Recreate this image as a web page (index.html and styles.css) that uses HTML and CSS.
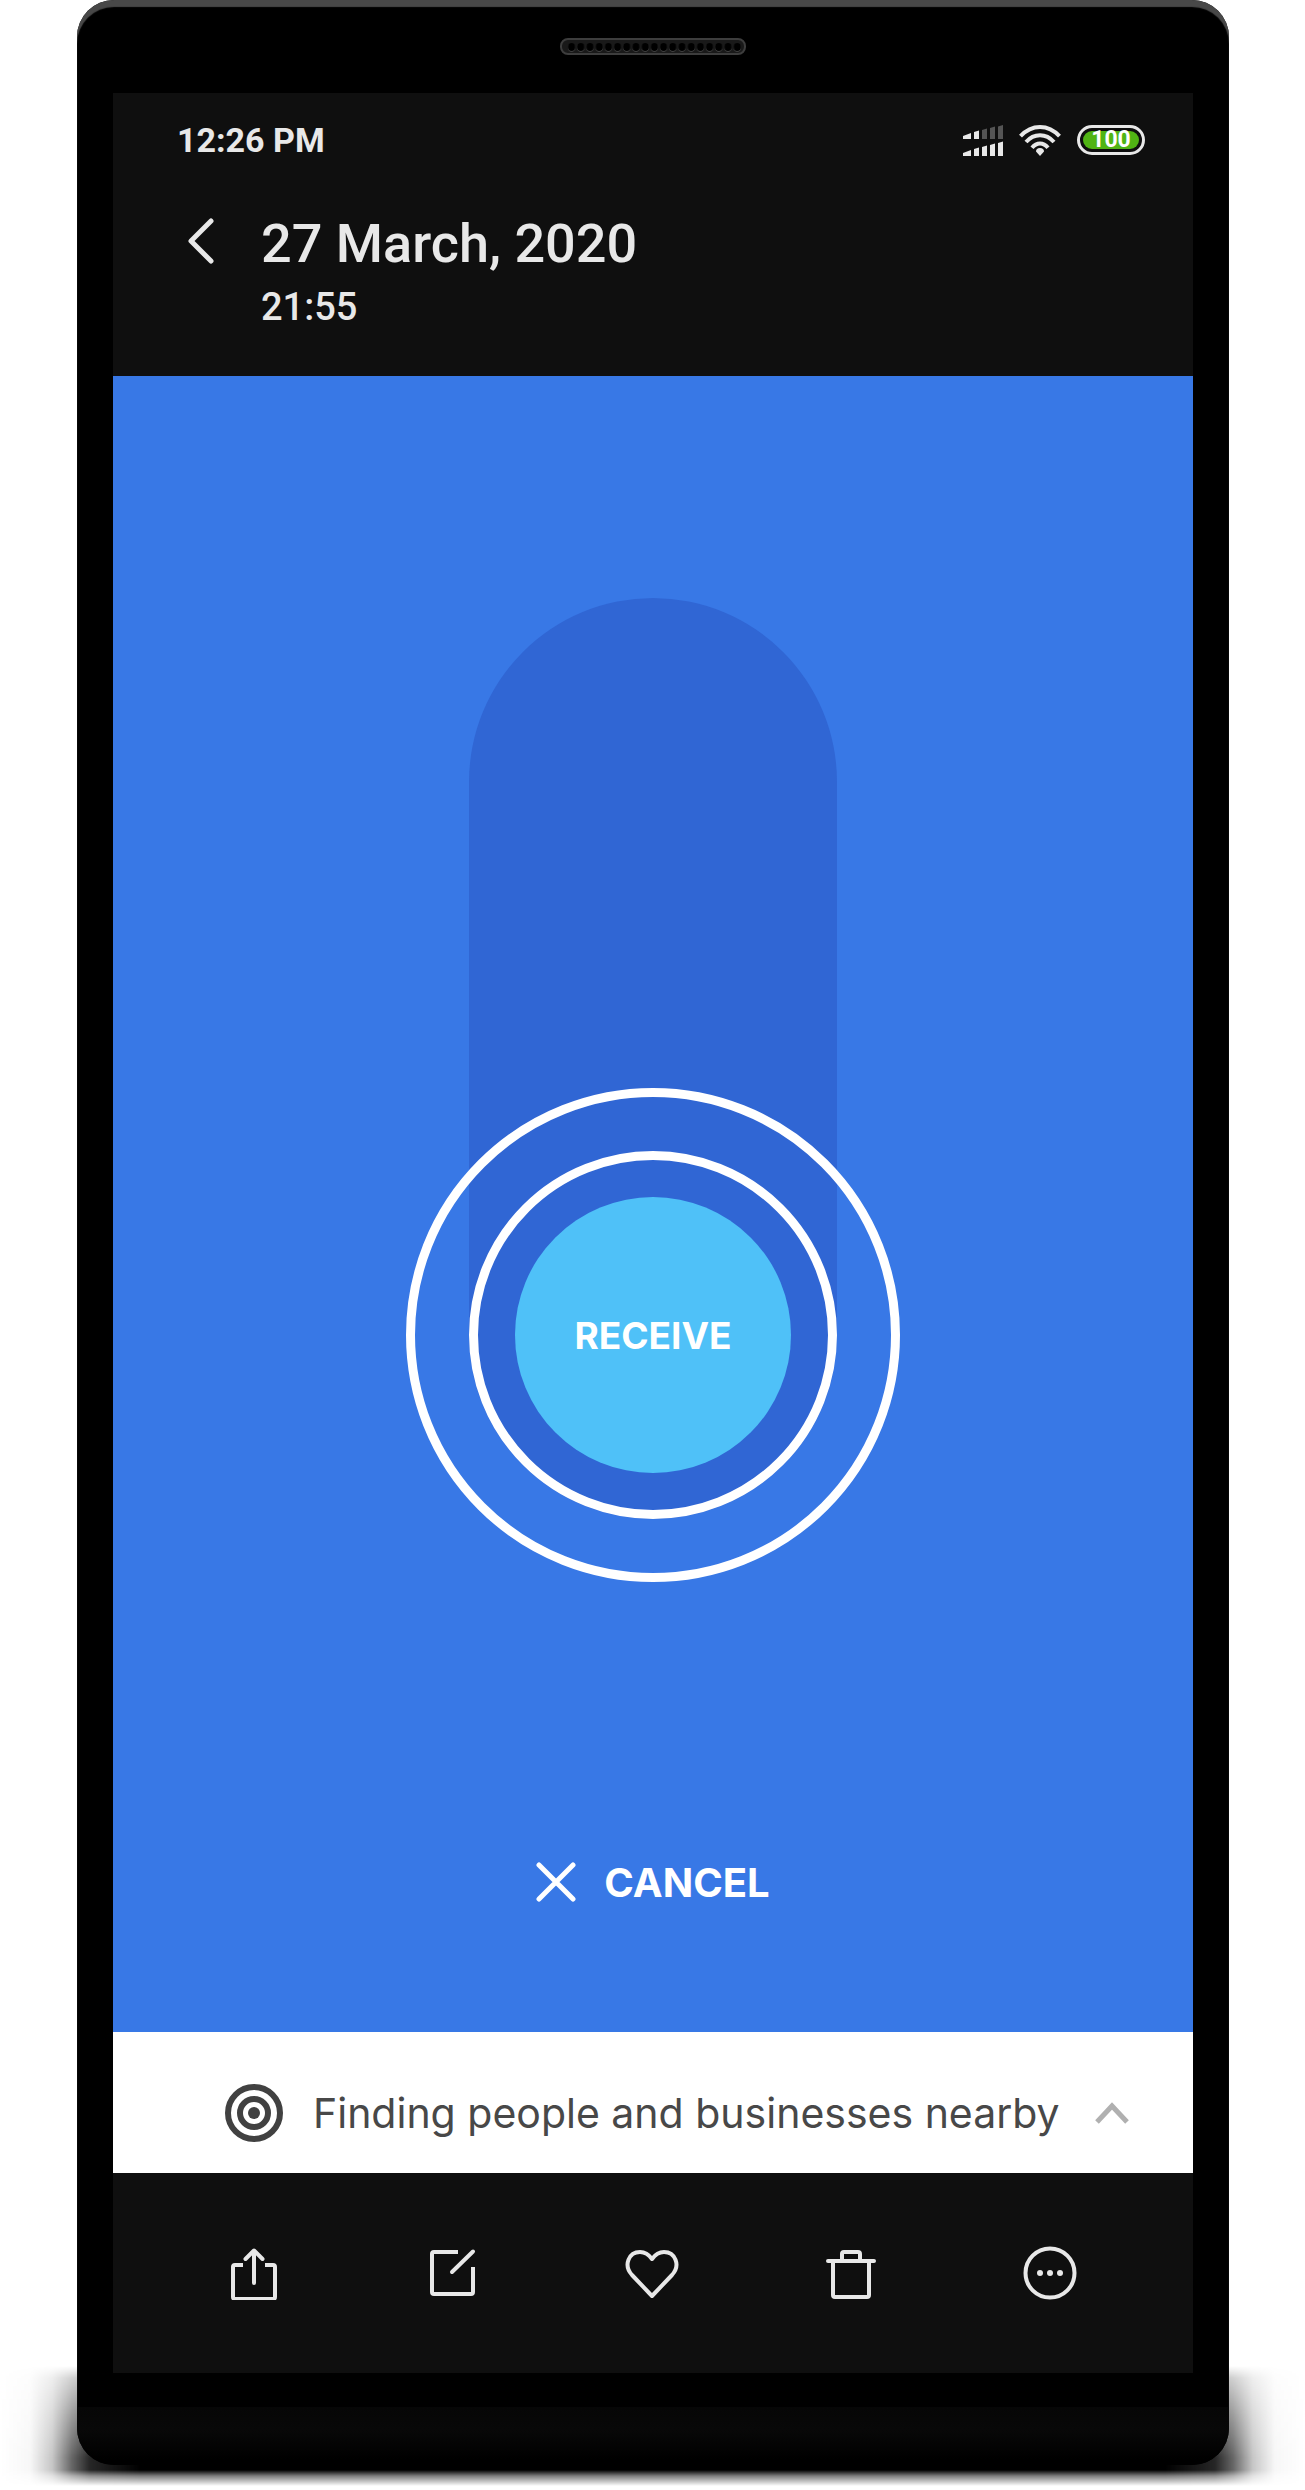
FILE: index.html
```html
<!DOCTYPE html>
<html lang="en">
<head>
<meta charset="utf-8">
<meta name="viewport" content="width=device-width, initial-scale=1">
<title>27 March, 2020</title>
<link rel="stylesheet" href="styles.css">
</head>
<body>
<div class="scene">
  <div class="ground-shadow"></div>
  <div class="phone">
    <div class="forehead">
      <svg class="speaker" width="186" height="18" viewBox="0 0 186 18" aria-hidden="true">
        <defs>
          <pattern id="holes" x="7" y="0" width="9.2" height="18" patternUnits="userSpaceOnUse">
            <ellipse cx="4.6" cy="9.8" rx="3.6" ry="4" fill="#4c4c4c"/>
            <ellipse cx="4.6" cy="9" rx="3.6" ry="4" fill="#000"/>
          </pattern>
        </defs>
        <rect x="1" y="1" width="184" height="15" rx="7" fill="#191919" stroke="#3d3d3d" stroke-width="2"/>
        <rect x="7" y="0" width="175" height="18" fill="url(#holes)"/>
      </svg>
    </div>
    <main class="screen">
      <div class="status">
        <span class="clock">12:26 PM</span>
        <div class="status-icons">
          <svg width="40" height="31" viewBox="0 0 40 31" aria-label="Signal">
            <g fill="#e8e8e8">
              <path d="M0 11l8-3v6H0zM11 7l5-1.500V14h-5z"/>
              <path d="M0 28l8-3v6H0zM11 24l5-1.500V31h-5zM19 22l5-1.500V31h-5zM27 20l5-1.500V31h-5zM35 18l5-1.500V31h-5z"/>
            </g>
            <path fill="#555" d="M19 5l5-1.500V14h-5zM27 3l5-1.500V14h-5zM35 1.500L40 0v14h-5z"/>
          </svg>
          <svg width="42" height="31" viewBox="0 0 42 31" fill="none" stroke="#e8e8e8" stroke-width="4" aria-label="Wi-Fi">
            <path d="M1.500 11.200Q10 2 21 2t19.500 9.200M7 17Q13 10.300 21 10.300T35 17M13 22.800Q16.500 18.500 21 18.500t8 4.300"/>
            <path fill="#e8e8e8" stroke="none" d="M21 31l-4-4.500q0-3.500 4-3.500t4 3.500z"/>
          </svg>
          <span class="battery"><span class="charge">100</span></span>
        </div>
      </div>
      <header class="title-bar">
        <button class="icon-button back" aria-label="Back">
          <svg width="28" height="48" viewBox="0 0 28 48" fill="none" stroke="#e8e8e8" stroke-width="5" stroke-linecap="round" stroke-linejoin="round"><path d="M24 4L4 24l20 20"/></svg>
        </button>
        <div>
          <h1 class="date">27 March, 2020</h1>
          <p class="time">21:55</p>
        </div>
      </header>
      <section class="transfer">
        <div class="slider">
          <div class="track"></div>
          <button class="knob"><span class="inner-ring"><span class="disc">RECEIVE</span></span></button>
        </div>
        <button class="cancel">
          <svg width="40" height="40" viewBox="0 0 40 40" stroke="#fff" stroke-width="5" stroke-linecap="round" aria-hidden="true"><path d="M3 3l34 34M37 3L3 37"/></svg>
          CANCEL
        </button>
      </section>
      <button class="nearby">
        <svg width="58" height="58" viewBox="0 0 58 58" fill="none" stroke="#414141" stroke-width="6" aria-hidden="true"><circle cx="29" cy="29" r="26"/><circle cx="29" cy="29" r="14"/><circle cx="29" cy="29" r="6" fill="#414141" stroke="none"/></svg>
        <span class="nearby-label">Finding people and businesses nearby</span>
        <svg width="34" height="22" viewBox="0 0 34 22" fill="none" stroke="#b0b0b0" stroke-width="5" aria-hidden="true"><path d="M2 20L17 4l15 16"/></svg>
      </button>
      <nav class="toolbar">
        <button class="icon-button" aria-label="Share">
          <svg class="tool" viewBox="0 0 54 54"><path d="M16 19H8q-2 0-2 2v30q0 2 2 2h38q2 0 2-2V21q0-2-2-2h-8"/><path stroke-linecap="round" d="M27 37V5M18.500 13L27 4.500l8.500 8.500"/></svg>
        </button>
        <button class="icon-button" aria-label="Edit">
          <svg class="tool" viewBox="0 0 54 54"><path d="M32 6H8Q6 6 6 8v38q0 2 2 2h37q2 0 2-2V21"/><path stroke-linecap="round" d="M26 26L47 5.500"/></svg>
        </button>
        <button class="icon-button" aria-label="Favourite">
          <svg class="tool" viewBox="0 0 54 54"><path d="M27 50L7 29C-2 19 4 6 15 6q7 0 12 7 5-7 12-7c11 0 17 13 8 23z"/></svg>
        </button>
        <button class="icon-button" aria-label="Delete">
          <svg class="tool" viewBox="0 0 54 54"><path stroke-linecap="round" d="M4 15h46"/><path d="M9 15v34q0 2 2 2h32q2 0 2-2V15M18 15V8q0-2 2-2h14q2 0 2 2v7"/></svg>
        </button>
        <button class="icon-button" aria-label="More">
          <svg class="tool" viewBox="0 0 54 54"><circle cx="27" cy="27" r="24.500"/><g fill="#e8e8e8" stroke="none"><circle cx="17" cy="27" r="3"/><circle cx="27" cy="27" r="3"/><circle cx="37" cy="27" r="3"/></g></svg>
        </button>
      </nav>
    </main>
    <div class="chin"></div>
  </div>
</div>
</body>
</html>
```

FILE: styles.css
```css
* { box-sizing: border-box; }

body {
  margin: 0;
  background: #fff;
  font-family: Roboto, sans-serif;
  color: #e8e8e8;
}

button {
  margin: 0;
  padding: 0;
  border: 0;
  background: none;
  color: inherit;
  font: inherit;
  cursor: pointer;
}

svg { display: block; flex: none; }

.scene {
  position: relative;
  padding: 0 76px 25px 77px;
}

.ground-shadow {
  position: absolute;
  left: 0;
  right: 0;
  bottom: 0;
  height: 124px;
  background: linear-gradient(to right,
    transparent 0, rgba(0, 0, 0, .03) 30px, rgba(0, 0, 0, .22) 52px, rgba(0, 0, 0, .6) 72px, rgba(0, 0, 0, .85) 90px, #000 140px,
    #000 calc(100% - 140px), rgba(0, 0, 0, .85) calc(100% - 90px), rgba(0, 0, 0, .6) calc(100% - 72px), rgba(0, 0, 0, .22) calc(100% - 52px), rgba(0, 0, 0, .03) calc(100% - 30px), transparent 100%);
  -webkit-mask-image: linear-gradient(to bottom, transparent 0, rgba(0, 0, 0, .3) 12px, rgba(0, 0, 0, .6) 44px, #000 92px, #000 104px, rgba(0, 0, 0, .5) 110px, transparent 120px);
  mask-image: linear-gradient(to bottom, transparent 0, rgba(0, 0, 0, .3) 12px, rgba(0, 0, 0, .6) 44px, #000 92px, #000 104px, rgba(0, 0, 0, .5) 110px, transparent 120px);
}

.phone {
  position: relative;
  overflow: hidden;
  border-radius: 37px;
  background: #000;
  box-shadow: inset 0 7px 1px #484848;
}

.forehead {
  display: flex;
  justify-content: center;
  height: 93px;
  padding-top: 38px;
}

.screen {
  margin: 0 36px;
  background: #0f0f0f;
}

.status {
  display: flex;
  justify-content: space-between;
  align-items: center;
  height: 94px;
  padding: 0 48px 0 64px;
}

.clock {
  font-size: 34px;
  font-weight: 700;
  line-height: 40px;
}

.status-icons {
  display: flex;
  align-items: center;
  gap: 16px;
}

.battery {
  width: 68px;
  height: 30px;
  padding: 3px;
  border: 3px solid #e8e8e8;
  border-radius: 15px;
}

.charge {
  display: block;
  border-radius: 9px;
  background: #50b414;
  color: #fff;
  font-size: 23px;
  font-weight: 700;
  line-height: 18px;
  text-align: center;
}

.title-bar {
  display: flex;
  align-items: flex-start;
  gap: 46px;
  height: 189px;
  padding: 24px 74px 0;
}

.back { padding-top: 6px; }

.date {
  margin: 0;
  font-size: 54px;
  font-weight: 500;
  line-height: 66px;
}

.time {
  margin: 6px 0 0;
  font-size: 38px;
  font-weight: 500;
  line-height: 48px;
}

.transfer {
  display: flex;
  flex-direction: column;
  align-items: center;
  gap: 270px;
  padding: 222px 0 120px;
  background: #3878e6;
  color: #fff;
  font-family: Inter, sans-serif;
}

.slider {
  display: grid;
  justify-items: center;
  align-items: end;
}

.track,
.knob { grid-area: 1 / 1; }

.track {
  width: 368px;
  height: 921px;
  margin-bottom: 63px;
  border-radius: 184px;
  background: #3066d4;
}

.knob {
  width: 494px;
  height: 494px;
  padding: 54px;
  border: 9px solid #fff;
  border-radius: 50%;
}

.inner-ring {
  display: grid;
  place-items: center;
  height: 368px;
  border: 9px solid #fff;
  border-radius: 50%;
}

.disc {
  display: grid;
  place-items: center;
  width: 276px;
  height: 276px;
  border-radius: 50%;
  background: #4fc1f8;
  font-size: 37px;
  font-weight: 700;
}

.cancel {
  display: flex;
  align-items: center;
  gap: 28px;
  height: 60px;
  font-size: 40px;
  font-weight: 700;
}

.nearby {
  display: flex;
  align-items: center;
  width: 100%;
  height: 141px;
  padding: 20px 64px 0 112px;
  gap: 30px;
  background: #fff;
  color: #484848;
  font-family: Inter, sans-serif;
  font-size: 41px;
}

.nearby-label {
  flex: 1;
  text-align: left;
  white-space: nowrap;
}

.toolbar {
  display: flex;
  height: 200px;
  padding: 0 43px 0 41px;
}

.icon-button {
  display: flex;
  justify-content: center;
}

.toolbar .icon-button {
  flex: 1;
  align-items: center;
}

.tool {
  width: 54px;
  height: 54px;
  fill: none;
  stroke: #e8e8e8;
  stroke-width: 4;
  stroke-linejoin: round;
}

.chin {
  height: 58px;
  margin-top: 34px;
  background: linear-gradient(to bottom, #060606, #080808 40%, #000 90%);
}
```
